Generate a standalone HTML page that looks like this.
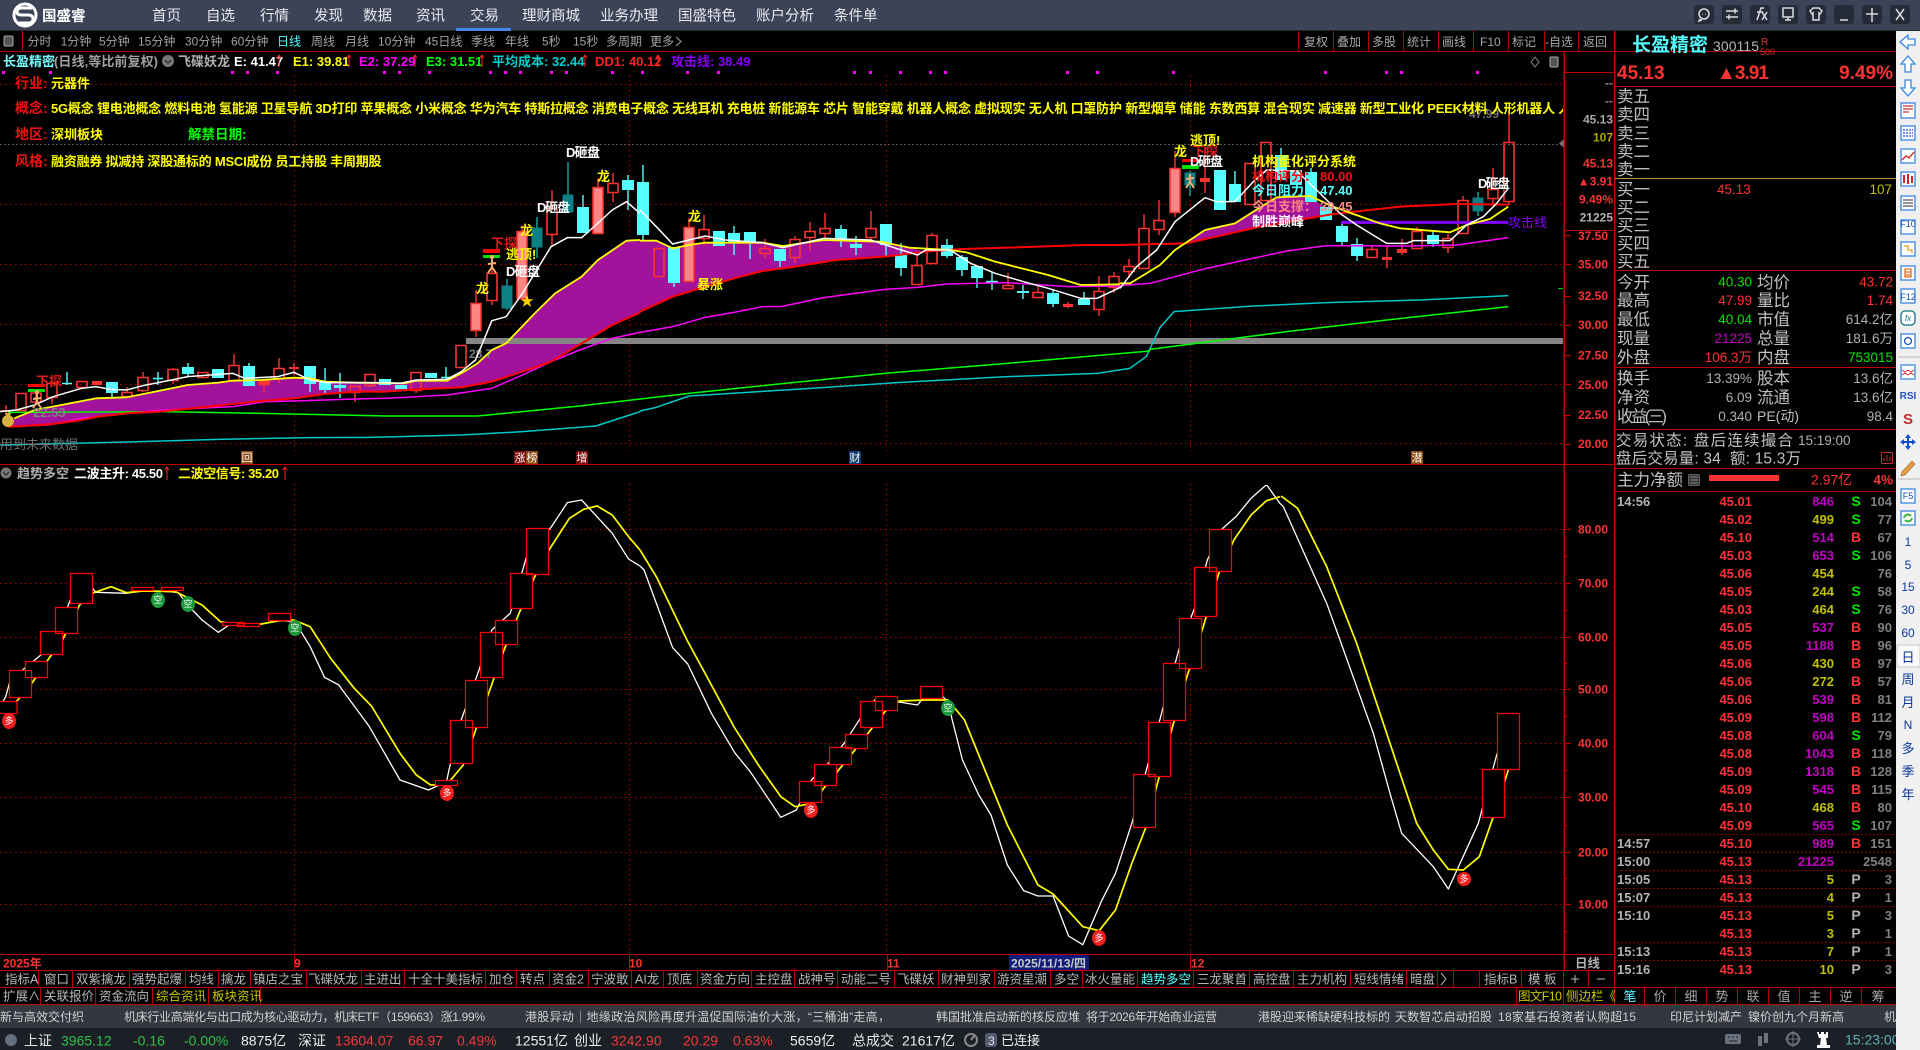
<!DOCTYPE html>
<html lang="zh"><head><meta charset="utf-8"><title>国盛睿</title>
<style>
html,body{margin:0;padding:0;background:#000;overflow:hidden;width:1920px;height:1050px}
svg{position:absolute;left:0;top:0;display:block}
text{font-family:"Liberation Sans","Noto Sans CJK SC",sans-serif;white-space:pre}
.ln{fill:none;vector-effect:non-scaling-stroke;stroke-linejoin:round}
.nav{font-size:14.5px;fill:#e8eaf0}
.tb{font-size:12px;fill:#a4a4a4}
.bt{font-size:12px;fill:#a8a8a8}
.b13{font-size:13px;font-weight:bold}
.ax{font-size:12px;font-weight:bold;fill:#ff3232}
.lb{font-size:16.5px;fill:#c0c0c0}
.v{font-size:13.5px}
.tab{font-size:12.5px;fill:#b8b8b8}
.nw{font-size:12px;fill:#d0d0d0}
.st{font-size:14px}
.p{font-size:13px;font-weight:bold;fill:#ff3232}
.tm{font-size:13px;font-weight:bold;fill:#b4b4b4}
.m{fill:#c000c0}.o{fill:#c0c000}
.gc{font-size:13px;font-weight:bold;fill:#808080}
.bs{font-size:14px;font-weight:bold}
.rt{font-size:12px;fill:#0b3a9a}
</style></head><body>
<svg width="1920" height="1050" viewBox="0 0 1920 1050" xmlns="http://www.w3.org/2000/svg">
<defs><clipPath id="cc"><rect x="0" y="52" width="1563" height="412"/></clipPath>
<clipPath id="cb"><rect x="0" y="485" width="1563" height="468"/></clipPath></defs>
<rect width="1920" height="1050" fill="#000"/>

<!-- title bar -->
<rect width="1920" height="30" fill="#3c4356"/>
<rect y="30" width="1920" height="1" fill="#23262f"/>
<rect x="456" y="28" width="55" height="3" fill="#4a86f0"/>
<circle cx="25" cy="15" r="11" fill="none" stroke="#fff" stroke-width="3"/>
<path d="M32 8 H22 Q17 8 17 12 Q17 15 22 15 H28 Q33 15 33 19 Q33 23 28 23 H17" fill="none" stroke="#fff" stroke-width="3"/>
<text x="42" y="21" font-size="14.5" font-weight="bold" fill="#fff">国盛睿</text>
<g class="nav">
<text class="nav" x="152" y="20.5">首页</text><text class="nav" x="206" y="20.5">自选</text><text class="nav" x="260" y="20.5">行情</text><text class="nav" x="314" y="20.5">发现</text><text class="nav" x="363" y="20.5">数据</text><text class="nav" x="416" y="20.5">资讯</text><text class="nav" x="470" y="20.5">交易</text><text class="nav" x="522" y="20.5">理财商城</text><text class="nav" x="600" y="20.5">业务办理</text><text class="nav" x="678" y="20.5">国盛特色</text><text class="nav" x="756" y="20.5">账户分析</text><text class="nav" x="834" y="20.5">条件单</text>
</g>
<g fill="#262b38"><rect x="1694" y="5" width="20" height="19" rx="3"/><rect x="1722" y="5" width="20" height="19" rx="3"/><rect x="1750" y="5" width="20" height="19" rx="3"/><rect x="1778" y="5" width="20" height="19" rx="3"/><rect x="1806" y="5" width="20" height="19" rx="3"/><rect x="1834" y="5" width="20" height="19" rx="3"/><rect x="1862" y="5" width="20" height="19" rx="3"/><rect x="1890" y="5" width="20" height="19" rx="3"/></g>
<g fill="none" stroke="#d8dce4" stroke-width="1.5">
<circle cx="1704" cy="14" r="5"/><path d="M1702 14h.5M1705 14h.5M1700 19l-1 2 3-1"/>
<path d="M1726 11h12M1726 17h12M1735 8.500v5M1729 14.500v5"/>
<path d="M1757 20l4-12h3M1757 12h6M1762 12l5 8M1767 12l-5 8"/>
<rect x="1783" y="8" width="10" height="9"/><path d="M1785 20h6M1788 17v3"/>
<path d="M1813 8l-3 3 2 3 1-1v7h6v-7l1 1 2-3-3-3h-6z"/>
<path d="M1840 20h8"/>
<path d="M1872 8v14M1866 14h12"/>
<path d="M1896 9l8 11M1904 9l-8 11"/>
</g>

<!-- toolbar row -->
<rect x="4" y="36" width="9" height="10" rx="1.500" fill="#555" stroke="#aaa"/>
<rect x="22" y="31" width="1" height="20" fill="#b00000"/>
<rect y="51" width="1896" height="1" fill="#b80000"/>
<text class="tb" x="27.500" y="45.500">分时</text><text class="tb" x="60.600" y="45.500">1分钟</text><text class="tb" x="99" y="45.500">5分钟</text><text class="tb" x="138" y="45.500">15分钟</text><text class="tb" x="185" y="45.500">30分钟</text><text class="tb" x="231" y="45.500">60分钟</text><text class="tb" x="277" y="45.500" style="fill:#55ffff">日线</text><text class="tb" x="311" y="45.500">周线</text><text class="tb" x="345" y="45.500">月线</text><text class="tb" x="378" y="45.500">10分钟</text><text class="tb" x="425" y="45.500">45日线</text><text class="tb" x="471" y="45.500">季线</text><text class="tb" x="505" y="45.500">年线</text><text class="tb" x="542" y="45.500">5秒</text><text class="tb" x="573" y="45.500">15秒</text><text class="tb" x="606" y="45.500">多周期</text><text class="tb" x="650" y="45.500">更多</text><path d="M676 37l5 4.500-5 4.500" fill="none" stroke="#a4a4a4"/>
<g fill="#b00000"><rect x="1298" y="31" width="1" height="20"/><rect x="1333" y="31" width="1" height="20"/><rect x="1368" y="31" width="1" height="20"/><rect x="1403" y="31" width="1" height="20"/><rect x="1438" y="31" width="1" height="20"/><rect x="1473" y="31" width="1" height="20"/><rect x="1508" y="31" width="1" height="20"/><rect x="1544" y="31" width="1" height="20"/><rect x="1578" y="31" width="1" height="20"/></g>
<text class="bt" x="1304" y="46">复权</text><text class="bt" x="1337" y="46">叠加</text><text class="bt" x="1372" y="46">多股</text><text class="bt" x="1407" y="46">统计</text><text class="bt" x="1442" y="46">画线</text><text class="bt" x="1480" y="46">F10</text><text class="bt" x="1512" y="46">标记</text><text class="bt" x="1545" y="46">-自选</text><text class="bt" x="1583" y="46">返回</text>

<!-- info line -->
<text class="b13" x="3" y="66" fill="#7ff">长盈精密</text><text class="b13" x="54" y="66" fill="#a0a0a0" textLength="104">(日线,等比前复权)</text>
<circle cx="168" cy="61" r="6" fill="#777"/><path d="M165 60l3 3 3-3" stroke="#222" fill="none"/>
<text class="b13" x="178" y="66" fill="#b0b0b0">飞碟妖龙</text>
<text class="b13" x="234" y="66" fill="#fff">E: 41.47</text><text class="b13" x="293" y="66" fill="#ff0">E1: 39.81</text><text class="b13" x="359" y="66" fill="#f0f">E2: 37.29</text><text class="b13" x="426" y="66" fill="#0f0">E3: 31.51</text><text class="b13" x="492" y="66" fill="#0cc">平均成本: 32.44</text><text class="b13" x="595" y="66" fill="#f22">DD1: 40.12</text><text class="b13" x="671" y="66" fill="#80f">攻击线: 38.49</text>
<path d="M279 67V55M277 58l2-3 2 3M349 67V55M347 58l2-3 2 3M415 67V55M413 58l2-3 2 3M482 67V55M480 58l2-3 2 3M585 67V55M583 58l2-3 2 3M658 67V55M656 58l2-3 2 3" fill="none" stroke="#f22"/>
<g fill="#f0f"><rect x="2" y="71" width="3" height="3"/><rect x="49" y="71" width="3" height="3"/><rect x="231" y="71" width="3" height="3"/><rect x="246" y="71" width="3" height="3"/><rect x="276" y="71" width="3" height="3"/><rect x="383" y="71" width="3" height="3"/><rect x="398" y="71" width="3" height="3"/><rect x="428" y="71" width="3" height="3"/><rect x="489" y="71" width="3" height="3"/><rect x="504" y="71" width="3" height="3"/><rect x="519" y="71" width="3" height="3"/><rect x="550" y="71" width="3" height="3"/><rect x="565" y="71" width="3" height="3"/><rect x="611" y="71" width="3" height="3"/><rect x="641" y="71" width="3" height="3"/><rect x="686" y="71" width="3" height="3"/><rect x="717" y="71" width="3" height="3"/><rect x="853" y="71" width="3" height="3"/><rect x="869" y="71" width="3" height="3"/><rect x="899" y="71" width="3" height="3"/><rect x="929" y="71" width="3" height="3"/><rect x="944" y="71" width="3" height="3"/><rect x="1066" y="71" width="3" height="3"/><rect x="1096" y="71" width="3" height="3"/><rect x="1172" y="71" width="3" height="3"/><rect x="1324" y="71" width="3" height="3"/><rect x="1385" y="71" width="3" height="3"/><rect x="1400" y="71" width="3" height="3"/><rect x="1476" y="71" width="3" height="3"/></g>

<!-- grid -->
<g stroke="#b00000" stroke-width="1" stroke-dasharray="1.500 3.500" fill="none">
<path d="M0 84.500H1564M0 204.500H1564M0 264.500H1564M0 324.500H1564M0 384.500H1564M0 443.500H1564"/>
<path d="M0 529.500H1564M0 583.500H1564M0 637.500H1564M0 689.500H1564M0 743.500H1564M0 797.500H1564M0 852.500H1564M0 904.500H1564"/>
<path d="M294.500 75V451M629.500 75V451M886.500 75V451M1190.500 75V451M294.500 484V953M629.500 484V953M886.500 484V953M1190.500 484V953"/>
</g>
<path d="M0 144.500H1564" stroke="#5a5a5a" stroke-dasharray="2 2"/>

<g clip-path="url(#cc)">
<!-- purple -->
<path transform="translate(0,200) scale(.40816,.33333)" fill="#a3129b" d="M35 655L85 630 150 615 235 595 310 592 400 570 460 555 535 548 570 542 640 540 720 533 760 535 795 545 870 548 990 550 1020 542 1095 542 1130 520 1170 490 1205 450 1240 430 1310 340 1360 280 1425 230 1465 180 1535 122 1570 120 1570 338 1500 375 1425 430 1350 485 1280 515 1205 545 1130 562 1020 568 945 575 870 575 795 582 720 595 640 603 570 612 470 625 390 635 310 640 240 650 200 660 130 672 60 678 20 680Z"/>
<path transform="translate(640,200) scale(.40816,.33333)" fill="#a3129b" d="M0 122L40 122 80 145 120 135 160 128 300 128 350 138 450 120 590 125 660 143 700 155 600 170 480 180 380 200 300 213 240 232 160 260 80 290 0 335Z"/>
<path transform="translate(1120,110) scale(.33333)" fill="#a3129b" d="M200 400L255 360 345 340 400 305 470 262 570 258 640 312 420 350Z"/>

<!-- gray band -->
<rect x="466" y="338" width="1098" height="6" fill="#858585"/>
<text x="469" y="358" font-size="12" font-weight="bold" fill="#808080">28.7</text>

<!-- wicks red -->
<path fill="none" stroke="#ff3232" stroke-width="1.400" d="M6 405V415M1 411H11M36 392V403M52 397V404M143 372V377M143 390V392M127 387V392M173 368V369M173 380V384M234 354V365M234 380V382M264 384V393M279 358V368M279 378V383M294 363V375M289 368H299M355 392V402M370 385V387M416 390V393M476 290V303M476 330V337M492 260V273M492 300V305M522 225V231M522 298V300M552 190V208M552 234V246M598 178V187M613 173V183M613 192V202M689 218V227M704 215V229M704 238V245M765 239V248M765 253V258M795 236V239M795 257V263M810 222V231M810 237V251M825 213V228M825 233V239M871 211V228M871 237V240M917 255V265M932 233V235M1008 273V285M1038 286V292M1068 302V308M1099 276V291M1099 309V316M1114 272V276M1114 287V293M1129 259V266M1129 271V278M1144 214V228M1159 200V220M1159 229V235M1175 151V168M1175 212V217M1205 147V193M1372 245V249M1387 246V268M1402 239V255M1417 227V231M1448 234V238M1448 247V253M1463 196V200M1493 168V189M1493 198V205M1509 110V142M1509 201V205"/>
<!-- wicks cyan -->
<path fill="none" stroke="#55ffff" stroke-width="1.400" d="M67 372V385M62 383.500H72M112 393V397M158 372V385M153 378.500H163M188 363V377M249 363V366M310 384V392M325 368V393M340 373V398M446 367V380M441 377.500H451M583 195V207M628 175V210M643 165V240M674 283V287M734 226V255M750 232V259M780 261V267M841 225V247M856 236V255M886 224V256M901 243V276M947 239V258M962 255V276M977 278V288M992 272V290M987 281.500H997M1023 285V299M1018 292H1028M1053 289V307M1084 292V299M1235 171V184M1281 148V155M1311 168V172M1342 223V245M1357 238V261M1433 232V247"/>
<path fill="none" stroke="#1aa" stroke-width="1.400" d="M507 279V310M537 217V258M568 162V195M1190 171V196M1478 192V216"/>
<!-- hollow red -->
<path fill="none" stroke="#ff3232" stroke-width="1.600" d="M16 393.500h10v17h-10zM31 393h10v9h-10zM47 383.500h10v14h-10zM77 381.500h10v6h-10zM122 392.500h10v4h-10zM138 377.500h10v13h-10zM168 369.500h10v11h-10zM198 372.500h10v5h-10zM229 365.500h10v15h-10zM259 380.500h10v4h-10zM274 368.500h10v10h-10zM350 386.500h10v6h-10zM365 374.500h10v11h-10zM411 372.500h10v18h-10zM456 345.500h10v22h-10zM487 273.500h10v27h-10zM547 208.500h10v26h-10zM608 183.500h10v9h-10zM654 248.500h10v28h-10zM699 229.500h10v9h-10zM760 248.500h10v5h-10zM790 239.500h10v18h-10zM805 231.500h10v6h-10zM820 228.500h10v5h-10zM866 228.500h10v9h-10zM912 265.500h10v19h-10zM927 235.500h10v28h-10zM1003 285.500h10v3h-10zM1033 292.500h10v5h-10zM1094 291.500h10v18h-10zM1109 276.500h10v11h-10zM1124 266.500h10v5h-10zM1139 228.500h10v40h-10zM1154 220.500h10v9h-10zM1245 163.500h10v41h-10zM1261 142.500h10v58h-10zM1367 249.500h10v8h-10zM1412 231.500h10v17h-10zM1443 238.500h10v9h-10zM1458 200.500h10v33h-10zM1488 189.500h10v9h-10zM1504 142.500h10v59h-10z"/>
<!-- filled red -->
<path fill="#ff3232" d="M92 381h10v4h-10zM1 410h10v2h-10zM259 380h10v4h-10zM1063 304h10v3h-10zM1382 257h10v3h-10zM1397 249h10v4h-10zM1200 178h10v4h-10zM289 367h10v2h-10z"/>
<!-- pink -->
<path fill="#ff8484" stroke="#ff3232" stroke-width="1.500" d="M471 303.500h10v27h-10zM517 231.500h10v67h-10zM593 187.500h10v46h-10zM684 227.500h10v54h-10zM1170 168.500h10v44h-10z"/>
<!-- teal -->
<path fill="#0c8083" stroke="#0c8083" d="M502 286h10v22h-10zM532 228h10v19h-10zM563 195h10v17h-10zM1185 173h10v12h-10zM1473 198h10v13h-10z"/>
<!-- cyan -->
<path fill="#55ffff" d="M106 382h12v11h-12zM182 367h12v7h-12zM212 369h12v9h-12zM243 366h12v20h-12zM304 366h12v18h-12zM319 382h12v8h-12zM334 385h12v3h-12zM379 379h12v6h-12zM395 385h12v4h-12zM425 373h12v5h-12zM577 207h12v26h-12zM622 180h12v10h-12zM637 182h12v53h-12zM668 247h12v36h-12zM713 231h12v15h-12zM728 233h12v9h-12zM744 232h12v11h-12zM774 249h12v12h-12zM835 229h12v12h-12zM850 244h12v4h-12zM880 224h12v21h-12zM895 255h12v13h-12zM941 245h12v11h-12zM956 257h12v13h-12zM971 266h12v12h-12zM986 281h12v2h-12zM1017 291h12v2h-12zM1047 293h12v11h-12zM1078 299h12v6h-12zM1214 170h12v40h-12zM1229 184h12v18h-12zM1275 155h12v25h-12zM1290 170h12v15h-12zM1305 172h12v30h-12zM1320 207h12v13h-12zM1336 226h12v16h-12zM1351 244h12v12h-12zM1427 235h12v9h-12z"/>

<!-- lines -->
<g stroke-width="1.500">
<g transform="translate(0,200) scale(.40816,.33333)">
<polyline class="ln" stroke="#00c8c8" points="0,735 345,725 535,718 760,713 910,712 1130,705 1280,695 1460,678 1568,635"/>
<polyline class="ln" stroke="#00ff00" points="20,637 400,635 640,640 832,645 945,648 1170,648 1280,635 1420,618 1568,597"/>
<polyline class="ln" stroke="#ff00ff" points="30,680 120,675 200,655 270,645 400,630 570,620 650,605 720,603 870,597 945,595 1095,585 1205,565 1280,525 1350,485 1420,450 1500,415 1568,397"/>
<polyline class="ln" stroke="#ff0000" stroke-width="2" points="20,680 60,678 130,672 200,660 240,650 310,640 390,635 470,625 570,612 640,603 720,595 795,582 870,575 945,575 1020,568 1130,562 1205,545 1280,515 1350,485 1425,430 1500,375 1568,338"/>
<polyline class="ln" stroke="#ffff00" stroke-width="1.800" points="35,655 85,630 150,615 235,595 310,592 400,570 460,555 535,548 570,542 640,540 720,533 760,535 795,545 870,548 990,550 1020,542 1095,542 1130,520 1170,490 1205,450 1240,430 1310,340 1360,280 1425,230 1465,180 1535,122 1568,120"/>
<polyline class="ln" stroke="#ffffff" points="0,635 40,630 85,615 130,590 200,565 235,560 270,568 310,570 350,557 400,545 460,530 570,520 600,535 680,530 720,517 760,540 800,548 870,548 945,548 980,550 1020,540 1095,538 1130,515 1165,480 1205,362 1240,350 1280,280 1350,140 1390,113 1425,113 1460,75 1500,30 1535,5 1568,40"/>
</g>
<g transform="translate(640,200) scale(.40816,.33333)">
<polyline class="ln" stroke="#00c8c8" points="0,633 40,622 120,588 380,568 640,547 900,530 1120,520 1200,505 1240,470 1275,380"/>
<polyline class="ln" stroke="#00ff00" points="0,597 120,580 340,552 600,520 900,490 1250,453"/>
<polyline class="ln" stroke="#ff00ff" points="0,397 80,380 160,352 230,337 300,320 345,320 450,293 600,268 680,262 750,252 900,248 1050,260 1176,258"/>
<polyline class="ln" stroke="#ff0000" stroke-width="2" points="0,335 80,290 160,260 240,232 300,213 380,200 480,180 600,170 700,155 790,147 900,143 1090,135 1176,135"/>
<polyline class="ln" stroke="#ffff00" stroke-width="1.800" points="0,122 40,122 80,145 120,135 160,128 300,128 350,138 450,120 590,125 660,143 760,150 800,157 870,185 1000,225 1080,255 1176,253"/>
<polyline class="ln" stroke="#ffffff" points="0,30 40,80 80,132 160,108 210,120 300,128 350,143 450,115 565,120 640,150 680,165 700,150 760,150 810,190 870,220 940,245 1000,265 1080,295 1120,295 1180,260"/>
</g>
<g transform="translate(1120,110) scale(.33333)">
<polyline class="ln" stroke="#00c8c8" points="118,655 162,605 400,588 620,578 900,570 1165,557"/>
<polyline class="ln" stroke="#00ff00" points="90,718 500,665 800,630 1165,590"/>
<polyline class="ln" stroke="#ff00ff" points="0,527 90,520 260,475 500,423 620,407 860,408 1010,405 1165,383"/>
<polyline class="ln" stroke="#ff0000" stroke-width="2" points="0,405 200,400 420,350 640,312 840,290 1010,282 1165,284"/>
<polyline class="ln" stroke="#8000ff" stroke-width="3" points="663,337 1165,337"/>
<polyline class="ln" stroke="#ffff00" stroke-width="1.800" points="0,520 30,520 120,465 165,420 255,360 345,340 400,305 470,262 570,258 640,290 700,312 780,340 840,355 990,367 1040,345 1110,327 1165,290"/>
<polyline class="ln" stroke="#ffffff" points="0,535 50,470 110,420 165,335 255,263 290,275 345,275 400,215 440,180 530,183 590,240 660,310 710,345 800,400 860,400 880,392 990,392 1040,345 1090,320 1130,280 1165,235"/>
</g>
</g>

<!-- bars/runners -->
<g fill="#ff0000"><rect x="28" y="384" width="17" height="3"/><rect x="483" y="249" width="17" height="4"/><rect x="1182" y="159" width="17" height="3"/></g>
<g fill="#00e000"><rect x="28" y="389" width="17" height="3"/><rect x="483" y="255" width="17" height="3"/><rect x="1182" y="165" width="17" height="4"/></g>
<g fill="none" stroke="#f0b070" stroke-width="2"><path d="M37 394v8l-4 6M37 402l4 6M33 399l8-1"/><path d="M492 259v8l-4 6M492 267l4 6M488 264l8-1"/><path d="M1190 174v8l-4 6M1190 182l4 6M1186 179l8-1"/></g>
<g fill="#f0b070"><circle cx="37" cy="392" r="2"/><circle cx="492" cy="257" r="2"/></g>
<circle cx="8" cy="421" r="6" fill="#d8b040"/><path d="M5 413h6l-1 3h-4z" fill="#d8b040"/>

<!-- chart labels -->
<text x="527" y="306" font-size="14" text-anchor="middle" fill="#ffd000">★</text>
<text class="b13" x="36" y="386" fill="#e01818">下探</text><text class="b13" x="491" y="248" fill="#e01818">下探</text><text class="b13" x="1192" y="156" fill="#e01818">下探</text>
<text class="b13" x="506" y="259" fill="#ff0">逃顶!</text><text class="b13" x="1190" y="145" fill="#ff0">逃顶!</text>
<text class="b13" x="597" y="181" fill="#ff0">龙</text><text class="b13" x="520" y="235" fill="#ff0">龙</text><text class="b13" x="476" y="293" fill="#ff0">龙</text><text class="b13" x="688" y="221" fill="#ff0">龙</text><text class="b13" x="1174" y="156" fill="#ff0">龙</text>
<g fill="#fff"><text class="b13" x="566" y="157" textLength="34">D砸盘</text><text class="b13" x="537" y="212" textLength="33">D砸盘</text><text class="b13" x="506" y="276" textLength="34">D砸盘</text><text class="b13" x="1190" y="166" textLength="33">D砸盘</text><text class="b13" x="1478" y="188" textLength="32">D砸盘</text></g>
<text class="b13" x="697" y="289" fill="#ff0" textLength="26">暴涨</text>
<text x="0" y="449" font-size="13" fill="#707070">用到未来数据</text>
<text x="33" y="417" font-size="13" font-weight="bold" fill="#808080">22.53</text>
<text x="1469" y="118" font-size="12" font-weight="bold" fill="#707070">47.99</text>
<text class="b13" x="1252" y="166" fill="#ff0" textLength="104">机构量化评分系统</text>
<text class="b13" x="1252" y="181" fill="#f01010">机构评分：</text><text class="b13" x="1320" y="181" fill="#f01010">80.00</text>
<text class="b13" x="1252" y="195" fill="#55ffff">今日阻力：</text><text class="b13" x="1320" y="195" fill="#55ffff">47.40</text>
<text class="b13" x="1252" y="211" fill="#ff8484">今日支撑：</text><text class="b13" x="1320" y="211" fill="#ff8484">39.45</text>
<text class="b13" x="1252" y="226" fill="#fff">制胜巅峰</text>
<text x="1508" y="227" font-size="13" fill="#8000ff">攻击线</text>
</g>

<!-- text overlay -->
<text x="15" y="88" font-size="14" font-weight="bold" fill="#f01010">行业:</text><text class="b13" x="51" y="88" fill="#ff0">元器件</text>
<text x="15" y="113" font-size="14" font-weight="bold" fill="#f01010">概念:</text>
<g clip-path="url(#cc)"><text class="b13" x="51" y="113" fill="#ff0" style="letter-spacing:-.2px">5G概念 锂电池概念 燃料电池 氢能源 卫星导航 3D打印 苹果概念 小米概念 华为汽车 特斯拉概念 消费电子概念 无线耳机 充电桩 新能源车 芯片 智能穿戴 机器人概念 虚拟现实 无人机 口罩防护 新型烟草 储能 东数西算 混合现实 减速器 新型工业化 PEEK材料 人形机器人 人</text></g>
<text x="15" y="139" font-size="14" font-weight="bold" fill="#f01010">地区:</text><text class="b13" x="51" y="139" fill="#ff0">深圳板块</text>
<text x="188" y="139" font-size="13.500" font-weight="bold" fill="#0f0">解禁日期:</text>
<text x="15" y="166" font-size="14" font-weight="bold" fill="#f01010">风格:</text><text class="b13" x="51" y="166" fill="#ff0" style="letter-spacing:-.2px">融资融券 拟减持 深股通标的 MSCI成份 员工持股 丰周期股</text>

<!-- top-right corner glyphs -->
<path d="M1535 57l4 5-4 5-4-5z" fill="none" stroke="#888"/><rect x="1550" y="57" width="8" height="10" rx="1" fill="#555" stroke="#aaa"/>
<path d="M1564 139v9l-5-4.500z" fill="#777"/>

<!-- tag icons -->
<g font-size="11" fill="#fff" text-anchor="middle">
<rect x="241" y="451" width="12" height="13" fill="#8a4a10"/><text x="247" y="461.500">回</text>
<rect x="514" y="451" width="12" height="13" fill="#7a0c0c"/><text x="520" y="461.500">涨</text>
<rect x="526" y="451" width="12" height="13" fill="#8a4a10"/><text x="532" y="461.500">榜</text>
<rect x="576" y="451" width="12" height="13" fill="#7a0c0c"/><text x="582" y="461.500">增</text>
<rect x="849" y="451" width="12" height="13" fill="#0a3a70"/><text x="855" y="461.500">财</text>
<rect x="1411" y="451" width="12" height="13" fill="#8a4a10"/><text x="1417" y="461.500">潜</text>
</g>

<!-- pane divider -->
<rect y="464" width="1615" height="1" fill="#c00000"/>
<circle cx="6" cy="473" r="5.500" fill="#777"/><path d="M3 472l3 3 3-3" stroke="#222" fill="none"/>
<text class="b13" x="17" y="478" fill="#b0b0b0">趋势多空</text>
<text class="b13" x="74" y="478" fill="#fff" textLength="89">二波主升: 45.50</text>
<path d="M167 480V467M165 470l2-3 2 3" fill="none" stroke="#f22"/>
<text class="b13" x="178" y="478" fill="#ff0" textLength="101">二波空信号: 35.20</text>
<path d="M285 480V467M283 470l2-3 2 3" fill="none" stroke="#f22"/>

<!-- lower pane -->
<g clip-path="url(#cb)">
<g stroke-width="1.300">
<g transform="translate(0,470) scale(.40816,.33333)">
<polyline class="ln" stroke="#fff" points="0,710 14,680 23,640 60,595 90,565 125,530 160,430 172,390 227,355 235,367 310,370 349,363 400,363 437,368 460,405 495,450 535,487 565,462 640,462 685,450 723,456 760,530 795,622 830,645 905,770 980,930 1050,960 1094,935 1100,900 1130,750 1175,595 1205,480 1250,430 1290,260 1350,172 1390,98 1425,90 1500,190 1540,267 1568,288"/>
<polyline class="ln" stroke="#ff0" stroke-width="1.700" points="40,695 75,645 120,565 155,505 195,405 230,368 272,350 310,368 350,363 430,365 495,405 540,455 590,465 640,462 685,452 720,450 760,470 810,565 868,655 910,708 980,850 1020,915 1055,945 1094,945 1135,885 1200,660 1235,540 1275,420 1310,320 1345,240 1395,145 1430,118 1463,108 1500,135 1540,200 1568,240"/>
</g>
<g transform="translate(640,470) scale(.40816,.33333)">
<polyline class="ln" stroke="#fff" points="0,288 10,300 80,533 117,582 175,730 232,848 270,905 345,1042 383,1020 420,930 465,875 500,820 540,745 575,690 640,697 680,705 690,690 714,650 755,695 765,750 790,870 830,975 860,1035 900,1185 940,1262 975,1278 1012,1278 1050,1398 1085,1424 1130,1295 1165,1210 1205,1060 1245,880 1280,720 1320,540 1360,410 1390,270 1425,178 1460,140 1497,85 1535,44 1568,100"/>
<polyline class="ln" stroke="#ff0" stroke-width="1.700" points="0,240 40,320 115,510 155,600 230,770 290,885 345,980 380,1010 420,1000 450,955 520,850 600,725 635,693 700,690 755,690 795,750 855,930 900,1065 975,1245 1012,1272 1085,1370 1125,1382 1165,1320 1205,1180 1240,1070 1300,790 1340,620 1380,470 1418,310 1455,210 1497,135 1535,92 1568,80"/>
</g>
<g transform="translate(1100,470) scale(.33333)">
<polyline class="ln" stroke="#fff" points="540,100 550,110 680,400 720,510 820,790 870,970 905,1090 1000,1190 1045,1257 1135,1060 1190,855 1215,790"/>
<polyline class="ln" stroke="#ff0" stroke-width="1.700" points="543,78 593,115 680,290 770,520 870,820 950,1060 1000,1140 1045,1198 1090,1200 1138,1160 1180,1040 1225,900"/>
</g>
</g>
<!-- boxes -->
<path fill="#000" stroke="#ff0000" stroke-width="1.200" d="M-5 701.500h22v12h-22zM9.500 670.500h22v27h-22zM25.500 661.500h22v16h-22zM40.500 631.500h22v23h-22zM55.500 607.500h22v26h-22zM70.500 573.500h22v30h-22zM131.500 587.500h22v3h-22zM161.500 587.500h22v3h-22zM222.500 622.500h22v3h-22zM237.500 623.500h22v3h-22zM268.500 613.500h22v7h-22zM435.500 780.500h22v5h-22zM450.500 720.500h22v43h-22zM465.500 680.500h22v47h-22zM480.500 632.500h22v45h-22zM495.500 620.500h22v24h-22zM510.500 573.500h22v35h-22zM526.500 528.500h22v46h-22zM799.500 781.500h22v21h-22zM814.500 764.500h22v21h-22zM829.500 747.500h22v17h-22zM845.500 734.500h22v14h-22zM860.500 701.500h22v26h-22zM875.500 696.500h22v14h-22zM920.500 686.500h22v12h-22zM1133.500 774.500h22v53h-22zM1148.500 722.500h22v54h-22zM1163.500 663.500h22v57h-22zM1179.500 618.500h22v50h-22zM1194.500 567.500h22v49h-22zM1209.500 529.500h22v42h-22zM1482.500 769.500h22v48h-22zM1497.500 713.500h22v56h-22z"/>
<g font-size="9" text-anchor="middle" fill="#fff">
<ellipse cx="9" cy="721" rx="7" ry="8" fill="#f02020"/><text x="9" y="724">多</text>
<ellipse cx="447" cy="793" rx="7" ry="8" fill="#f02020"/><text x="447" y="796">多</text>
<ellipse cx="811" cy="810" rx="7" ry="8" fill="#f02020"/><text x="811" y="813">多</text>
<ellipse cx="1099" cy="938" rx="7" ry="8" fill="#f02020"/><text x="1099" y="941">多</text>
<ellipse cx="1464" cy="879" rx="7" ry="7" fill="#f02020"/><text x="1464" y="882">多</text>
<ellipse cx="158" cy="600" rx="7" ry="8" fill="#1c9a3c"/><text x="158" y="603">空</text>
<ellipse cx="188" cy="604" rx="7" ry="8" fill="#1c9a3c"/><text x="188" y="607">空</text>
<ellipse cx="295" cy="628" rx="7" ry="8" fill="#1c9a3c"/><text x="295" y="631">空</text>
<ellipse cx="948" cy="708" rx="7" ry="8" fill="#1c9a3c"/><text x="948" y="711">空</text>
</g>
</g>

<!-- axis -->
<g fill="#c00000">
<rect x="1563.500" y="52" width="1.500" height="918"/>
<rect x="1614" y="31" width="1.500" height="939"/>
<rect x="1564" y="72" width="50" height="1"/>
<rect x="1564" y="230" width="50" height="1"/>
<rect x="1564" y="264" width="7" height="1"/><rect x="1564" y="235" width="7" height="1"/><rect x="1564" y="296" width="7" height="1"/><rect x="1564" y="325" width="7" height="1"/><rect x="1564" y="355" width="7" height="1"/><rect x="1564" y="384" width="7" height="1"/><rect x="1564" y="415" width="7" height="1"/><rect x="1564" y="444" width="7" height="1"/>
<rect x="1564" y="529" width="7" height="1"/><rect x="1564" y="583" width="7" height="1"/><rect x="1564" y="637" width="7" height="1"/><rect x="1564" y="689" width="7" height="1"/><rect x="1564" y="743" width="7" height="1"/><rect x="1564" y="797" width="7" height="1"/><rect x="1564" y="852" width="7" height="1"/><rect x="1564" y="904" width="7" height="1"/>
<rect x="1564" y="556" width="3" height="1"/><rect x="1564" y="610" width="3" height="1"/><rect x="1564" y="663" width="3" height="1"/><rect x="1564" y="716" width="3" height="1"/><rect x="1564" y="770" width="3" height="1"/><rect x="1564" y="825" width="3" height="1"/><rect x="1564" y="878" width="3" height="1"/><rect x="1564" y="931" width="3" height="1"/>
</g>
<rect x="1558" y="288" width="5" height="1" fill="#0c0"/>
<g text-anchor="end">
<text class="ax" x="1613" y="87" style="fill:#888">--</text><text class="ax" x="1613" y="105" style="fill:#888">--</text>
<text class="ax" x="1613" y="123.500" style="fill:#a8a8a8">45.13</text><text class="ax" x="1613" y="141.500" style="fill:#a8a800">107</text>
<text class="ax" x="1613" y="167.500">45.13</text><text class="ax" x="1613" y="185.500">▲3.91</text><text class="ax" x="1613" y="203.500">9.49%</text><text class="ax" x="1613" y="221.500" style="fill:#b0b0b0">21225</text>
<text class="ax" x="1608" y="240">37.50</text><text class="ax" x="1608" y="268.500">35.00</text><text class="ax" x="1608" y="300">32.50</text><text class="ax" x="1608" y="329">30.00</text><text class="ax" x="1608" y="359.500">27.50</text><text class="ax" x="1608" y="389">25.00</text><text class="ax" x="1608" y="419">22.50</text><text class="ax" x="1608" y="448">20.00</text>
<text class="ax" x="1608" y="533.500">80.00</text><text class="ax" x="1608" y="587.500">70.00</text><text class="ax" x="1608" y="641.500">60.00</text><text class="ax" x="1608" y="693.500">50.00</text><text class="ax" x="1608" y="747.500">40.00</text><text class="ax" x="1608" y="801.500">30.00</text><text class="ax" x="1608" y="856.500">20.00</text><text class="ax" x="1608" y="908.500">10.00</text>
</g>

<!-- time axis -->
<rect y="954" width="1615" height="1" fill="#c00000"/>
<rect y="970" width="1615" height="1" fill="#c00000"/>
<rect y="987" width="1896" height="1" fill="#c00000"/>
<rect y="1004" width="1896" height="1" fill="#c00000"/>
<g font-size="12" font-weight="bold" fill="#ff3232"><text x="3" y="967.500">2025年</text><text x="294" y="967.500">9</text><text x="629" y="967.500">10</text><text x="887" y="967.500">11</text><text x="1191" y="967.500">12</text></g>
<g fill="#c00000"><rect x="294" y="955" width="1" height="15"/><rect x="629" y="955" width="1" height="15"/><rect x="887" y="955" width="1" height="15"/><rect x="1190" y="955" width="1" height="15"/></g>
<rect x="1009" y="955" width="80" height="15" fill="#101c78"/>
<text x="1011" y="967.500" font-size="12" font-weight="bold" fill="#c8c8c8" textLength="75">2025/11/13/四</text>
<text x="1575" y="967.500" font-size="12.500" font-weight="bold" fill="#b0b0b0">日线</text>

<!-- tabs row -->
<path fill="none" stroke="#b80000" d="M38.500 971V987M72.500 971V987M129.500 971V987M185.500 971V987M218.500 971V987M250.500 971V987M306.500 971V987M361.500 971V987M404.500 971V987M485.500 971V987M516.500 971V987M549.500 971V987M588.500 971V987M631.500 971V987M663.500 971V987M697.500 971V987M751.500 971V987M794.500 971V987M837.500 971V987M894.500 971V987M938.500 971V987M994.500 971V987M1050.500 971V987M1082.500 971V987M1137.500 971V987M1193.500 971V987M1249.500 971V987M1293.500 971V987M1350.500 971V987M1406.500 971V987M1437.500 971V987M1453.500 971V987M1479.500 971V987M1521.500 971V987M1563.500 971V1005M1588.500 971V987M40.500 988V1004M95.500 988V1004M152.500 988V1004M208.500 988V1004M260.500 988V1004M1516.500 988V1004M1614.500 971V1004"/>
<g class="tab">
<text class="tab" x="5" y="983.500">指标A</text><text class="tab" x="44" y="983.500">窗口</text><text class="tab" x="76" y="983.500">双紫擒龙</text><text class="tab" x="132" y="983.500">强势起爆</text><text class="tab" x="189" y="983.500">均线</text><text class="tab" x="221" y="983.500">擒龙</text><text class="tab" x="253" y="983.500">镇店之宝</text><text class="tab" x="308" y="983.500">飞碟妖龙</text><text class="tab" x="364" y="983.500">主进出</text><text class="tab" x="408" y="983.500">十全十美指标</text><text class="tab" x="489" y="983.500">加仓</text><text class="tab" x="520" y="983.500">转点</text><text class="tab" x="552" y="983.500">资金2</text><text class="tab" x="591" y="983.500">宁波敢</text><text class="tab" x="635" y="983.500">AI龙</text><text class="tab" x="667" y="983.500">顶底</text><text class="tab" x="700" y="983.500">资金方向</text><text class="tab" x="755" y="983.500">主控盘</text><text class="tab" x="798" y="983.500">战神号</text><text class="tab" x="841" y="983.500">动能二号</text><text class="tab" x="897" y="983.500">飞碟妖</text><text class="tab" x="941" y="983.500">财神到家</text><text class="tab" x="997" y="983.500">游资星潮</text><text class="tab" x="1054" y="983.500">多空</text><text class="tab" x="1085" y="983.500">冰火量能</text><text class="tab" x="1141" y="983.500" style="fill:#55ffff">趋势多空</text><text class="tab" x="1197" y="983.500">三龙聚首</text><text class="tab" x="1253" y="983.500">高控盘</text><text class="tab" x="1297" y="983.500">主力机构</text><text class="tab" x="1354" y="983.500">短线情绪</text><text class="tab" x="1410" y="983.500">暗盘</text><text class="tab" x="1484" y="983.500">指标B</text><text class="tab" x="1528" y="983.500">模 板</text>
</g>
<path d="M1441 973l5 6-5 6" fill="none" stroke="#aaa"/>
<path d="M1571 979h8M1575 975v8M1597 979h8" stroke="#bbb" fill="none"/>
<text class="tab" x="3" y="1000.500">扩展∧</text><text class="tab" x="44" y="1000.500">关联报价</text><text class="tab" x="99" y="1000.500">资金流向</text><text class="tab" x="156" y="1000.500" style="fill:#c8c800">综合资讯</text><text class="tab" x="212" y="1000.500" style="fill:#c8c800">板块资讯</text>
<text class="tab" x="1518" y="1000.500" style="fill:#c8c800" textLength="44">图文F10</text><text class="tab" x="1566" y="1000.500" style="fill:#c8c800">侧边栏《</text>

<!-- news -->
<rect y="1005" width="1896" height="23" fill="#34373f"/>
<text class="nw" x="0" y="1021">新与高效交付织</text>
<text class="nw" x="124" y="1021" textLength="361">机床行业高端化与出口成为核心驱动力，机床ETF（159663）涨1.99%</text>
<text class="nw" x="525" y="1021" textLength="365">港股异动｜地缘政治风险再度升温促国际油价大涨，“三桶油”走高，</text>
<text class="nw" x="936" y="1021" textLength="144">韩国批准启动新的核反应堆</text>
<text class="nw" x="1086" y="1021" textLength="131">将于2026年开始商业运营</text>
<text class="nw" x="1258" y="1021" textLength="132">港股迎来稀缺硬科技标的</text>
<text class="nw" x="1395" y="1021" textLength="97">天数智芯启动招股</text>
<text class="nw" x="1498" y="1021" textLength="138">18家基石投资者认购超15</text>
<text class="nw" x="1670" y="1021">印尼计划减产</text>
<text class="nw" x="1748" y="1021">镍价创九个月新高</text>
<text class="nw" x="1884" y="1021">机</text>

<!-- status bar -->
<rect y="1028" width="1896" height="22" fill="#1c2026"/>
<circle cx="11" cy="1040" r="6" fill="#66707c"/>
<g class="st">
<text class="st" x="24" y="1045.500" fill="#e8e8e8">上证</text><text class="st" x="61" y="1045.500" fill="#2fc24a">3965.12</text><text class="st" x="133" y="1045.500" fill="#2fc24a">-0.16</text><text class="st" x="184" y="1045.500" fill="#2fc24a">-0.00%</text><text class="st" x="241" y="1045.500" fill="#eee">8875亿</text>
<text class="st" x="298" y="1045.500" fill="#e8e8e8">深证</text><text class="st" x="335" y="1045.500" fill="#f03a3a">13604.07</text><text class="st" x="408" y="1045.500" fill="#f03a3a">66.97</text><text class="st" x="457" y="1045.500" fill="#f03a3a">0.49%</text><text class="st" x="515" y="1045.500" fill="#eee">12551亿</text>
<text class="st" x="574" y="1045.500" fill="#e8e8e8">创业</text><text class="st" x="611" y="1045.500" fill="#f03a3a">3242.90</text><text class="st" x="683" y="1045.500" fill="#f03a3a">20.29</text><text class="st" x="733" y="1045.500" fill="#f03a3a">0.63%</text><text class="st" x="790" y="1045.500" fill="#eee">5659亿</text>
<text class="st" x="852" y="1045.500" fill="#e8e8e8">总成交</text><text class="st" x="902" y="1045.500" fill="#eee">21617亿</text>
<text class="st" x="1001" y="1045" fill="#eee" style="font-size:13px">已连接</text>
</g>
<circle cx="971" cy="1040" r="6" fill="none" stroke="#8a8a8a" stroke-width="2"/>
<path d="M971 1040l3-4" stroke="#8a8a8a" stroke-width="2"/>
<rect x="985" y="1033" width="12" height="14" rx="3" fill="#555c6c"/><text x="988" y="1045" font-size="12" fill="#dde">3</text>
<rect x="1725" y="1034" width="16" height="10" rx="2" fill="#6a7280"/>
<path d="M1728 1037h2M1732 1037h2M1736 1037h2M1729 1041h8" stroke="#1c2026"/>
<path d="M1758 1036h4v10h-4zM1764 1033h4v10h-4z" fill="#6a7280"/>
<circle cx="1793" cy="1039" r="6" fill="none" stroke="#6a7280" stroke-width="2"/><path d="M1793 1031v16M1785 1039h16" stroke="#6a7280"/>
<path d="M1817 1032h2v2h2v-2h3v2h2v-2h2v6h-2l1 7h3v3h-13v-3h3l1-7h-2z" fill="#fff" stroke="none"/>
<text x="1845" y="1044.500" font-size="14" fill="#5fb0b8">15:23:00</text>

<!-- right panel -->
<text x="1632" y="51" font-size="19" font-weight="bold" fill="#55ffff">长盈精密</text>
<text x="1713" y="51" font-size="14" fill="#b8b8b8" textLength="46">300115</text>
<text x="1761" y="45" font-size="10" fill="#e03030">R</text><text x="1760" y="55" font-size="9" fill="#e03030">500</text>
<rect x="1615" y="86" width="281" height="1" fill="#c00000"/>
<text x="1617" y="79" font-size="19" font-weight="bold" fill="#ff3232">45.13</text>
<text x="1717" y="79" font-size="19" font-weight="bold" fill="#ff3232" textLength="52">▲3.91</text>
<text x="1893" y="79" font-size="19" font-weight="bold" fill="#ff3232" text-anchor="end">9.49%</text>
<g class="lb">
<text class="lb" x="1617" y="102">卖五</text><text class="lb" x="1617" y="120">卖四</text><text class="lb" x="1617" y="139">卖三</text><text class="lb" x="1617" y="157">卖二</text><text class="lb" x="1617" y="175">卖一</text>
<text class="lb" x="1617" y="195">买一</text><text class="lb" x="1617" y="213">买二</text><text class="lb" x="1617" y="231">买三</text><text class="lb" x="1617" y="249">买四</text><text class="lb" x="1617" y="267">买五</text>
</g>
<rect x="1615" y="178" width="281" height="1" fill="#b89428"/>
<text class="v" x="1717" y="194" fill="#ff3232">45.13</text><text class="v" x="1892" y="194" fill="#c0c000" text-anchor="end">107</text>
<rect x="1615" y="270" width="281" height="1" fill="#c00000"/>
<rect x="1615" y="367" width="281" height="1" fill="#c00000"/>
<rect x="1615" y="429" width="281" height="1" fill="#c00000"/>
<rect x="1615" y="468" width="281" height="1" fill="#c00000"/>
<rect x="1615" y="491" width="281" height="1" fill="#c00000"/>
<text class="lb" x="1617" y="288">今开</text><text class="lb" x="1617" y="306">最高</text><text class="lb" x="1617" y="325">最低</text><text class="lb" x="1617" y="344">现量</text><text class="lb" x="1617" y="363">外盘</text><text class="lb" x="1617" y="384">换手</text><text class="lb" x="1617" y="403">净资</text><text class="lb" x="1617" y="422" textLength="50">收益(三)</text>
<text class="lb" x="1757" y="288">均价</text><text class="lb" x="1757" y="306">量比</text><text class="lb" x="1757" y="325">市值</text><text class="lb" x="1757" y="344">总量</text><text class="lb" x="1757" y="363">内盘</text><text class="lb" x="1757" y="384">股本</text><text class="lb" x="1757" y="403">流通</text><text x="1757" y="421" font-size="14" fill="#c0c0c0">PE(动)</text>
<g class="v" text-anchor="end">
<text class="v" x="1752" y="286.500" fill="#00e600">40.30</text><text class="v" x="1752" y="305" fill="#ff3232">47.99</text><text class="v" x="1752" y="324" fill="#00e600">40.04</text><text class="v" x="1752" y="343" fill="#c000c0">21225</text><text class="v" x="1752" y="362" fill="#ff3232">106.3万</text>
<text class="v" x="1893" y="286.500" fill="#ff3232">43.72</text><text class="v" x="1893" y="305" fill="#ff3232">1.74</text><text class="v" x="1893" y="324" fill="#b0b0b0">614.2亿</text><text class="v" x="1893" y="343" fill="#b0b0b0">181.6万</text><text class="v" x="1893" y="362" fill="#00e600">753015</text>
<text class="v" x="1752" y="383" fill="#b0b0b0">13.39%</text><text class="v" x="1752" y="402" fill="#b0b0b0">6.09</text><text class="v" x="1752" y="421" fill="#b0b0b0">0.340</text>
<text class="v" x="1893" y="383" fill="#b0b0b0">13.6亿</text><text class="v" x="1893" y="402" fill="#b0b0b0">13.6亿</text><text class="v" x="1893" y="421" fill="#b0b0b0">98.4</text>
</g>
<text x="1616" y="445.500" font-size="15.500" fill="#c0c0c0" textLength="177">交易状态: 盘后连续撮合</text><text x="1798" y="445" font-size="13.500" fill="#b0b0b0">15:19:00</text>
<text x="1616" y="463.500" font-size="15.500" fill="#c0c0c0" textLength="185">盘后交易量: 34  额: 15.3万</text>
<rect x="1881.500" y="452.500" width="11" height="11" rx="1" fill="none" stroke="#c03030"/><path d="M1884 461v-3M1887 461v-6M1890 461v-4" stroke="#c03030"/>
<text class="lb" x="1617" y="485.500">主力净额</text>
<rect x="1688.500" y="474.500" width="11" height="11" rx="1.500" fill="#333" stroke="#666"/>
<path d="M1690 477h8M1690 480h8M1690 483h8" stroke="#888"/>
<rect x="1709" y="475" width="70" height="6" fill="#ff3232"/>
<text x="1811" y="484.500" font-size="14" fill="#ff3232">2.97亿</text><text x="1893" y="484.500" font-size="13.500" font-weight="bold" fill="#ff3232" text-anchor="end">4%</text>

<!-- tick list -->
<g text-anchor="start">
<text class="tm" x="1617" y="506">14:56</text><text class="tm" x="1617" y="848">14:57</text><text class="tm" x="1617" y="866">15:00</text><text class="tm" x="1617" y="884">15:05</text><text class="tm" x="1617" y="902">15:07</text><text class="tm" x="1617" y="920">15:10</text><text class="tm" x="1617" y="956">15:13</text><text class="tm" x="1617" y="974">15:16</text>
</g>
<path d="M1617 834.500H1895M1617 852.500H1895M1617 870.500H1895M1617 888.500H1895M1617 906.500H1895M1617 942.500H1895M1617 960.500H1895" stroke="#b00000" stroke-dasharray="1.500 2.500"/>
<g text-anchor="end">
<text class="p" x="1752" y="506">45.01</text><text class="p m" x="1834" y="506" style="fill:#c000c0">846</text><text class="gc" x="1892" y="506">104</text>
<text class="p" x="1752" y="524">45.02</text><text class="p" x="1834" y="524" style="fill:#c0c000">499</text><text class="gc" x="1892" y="524">77</text>
<text class="p" x="1752" y="542">45.10</text><text class="p" x="1834" y="542" style="fill:#c000c0">514</text><text class="gc" x="1892" y="542">67</text>
<text class="p" x="1752" y="560">45.03</text><text class="p" x="1834" y="560" style="fill:#c000c0">653</text><text class="gc" x="1892" y="560">106</text>
<text class="p" x="1752" y="578">45.06</text><text class="p" x="1834" y="578" style="fill:#c0c000">454</text><text class="gc" x="1892" y="578">76</text>
<text class="p" x="1752" y="596">45.05</text><text class="p" x="1834" y="596" style="fill:#c0c000">244</text><text class="gc" x="1892" y="596">58</text>
<text class="p" x="1752" y="614">45.03</text><text class="p" x="1834" y="614" style="fill:#c0c000">464</text><text class="gc" x="1892" y="614">76</text>
<text class="p" x="1752" y="632">45.05</text><text class="p" x="1834" y="632" style="fill:#c000c0">537</text><text class="gc" x="1892" y="632">90</text>
<text class="p" x="1752" y="650">45.05</text><text class="p" x="1834" y="650" style="fill:#c000c0">1188</text><text class="gc" x="1892" y="650">96</text>
<text class="p" x="1752" y="668">45.06</text><text class="p" x="1834" y="668" style="fill:#c0c000">430</text><text class="gc" x="1892" y="668">97</text>
<text class="p" x="1752" y="686">45.06</text><text class="p" x="1834" y="686" style="fill:#c0c000">272</text><text class="gc" x="1892" y="686">57</text>
<text class="p" x="1752" y="704">45.06</text><text class="p" x="1834" y="704" style="fill:#c000c0">539</text><text class="gc" x="1892" y="704">81</text>
<text class="p" x="1752" y="722">45.09</text><text class="p" x="1834" y="722" style="fill:#c000c0">598</text><text class="gc" x="1892" y="722">112</text>
<text class="p" x="1752" y="740">45.08</text><text class="p" x="1834" y="740" style="fill:#c000c0">604</text><text class="gc" x="1892" y="740">79</text>
<text class="p" x="1752" y="758">45.08</text><text class="p" x="1834" y="758" style="fill:#c000c0">1043</text><text class="gc" x="1892" y="758">118</text>
<text class="p" x="1752" y="776">45.09</text><text class="p" x="1834" y="776" style="fill:#c000c0">1318</text><text class="gc" x="1892" y="776">128</text>
<text class="p" x="1752" y="794">45.09</text><text class="p" x="1834" y="794" style="fill:#c000c0">545</text><text class="gc" x="1892" y="794">115</text>
<text class="p" x="1752" y="812">45.10</text><text class="p" x="1834" y="812" style="fill:#c0c000">468</text><text class="gc" x="1892" y="812">80</text>
<text class="p" x="1752" y="830">45.09</text><text class="p" x="1834" y="830" style="fill:#c000c0">565</text><text class="gc" x="1892" y="830">107</text>
<text class="p" x="1752" y="848">45.10</text><text class="p" x="1834" y="848" style="fill:#c000c0">989</text><text class="gc" x="1892" y="848">151</text>
<text class="p" x="1752" y="866">45.13</text><text class="p" x="1834" y="866" style="fill:#c000c0">21225</text><text class="gc" x="1892" y="866">2548</text>
<text class="p" x="1752" y="884">45.13</text><text class="p" x="1834" y="884" style="fill:#c0c000">5</text><text class="gc" x="1892" y="884">3</text>
<text class="p" x="1752" y="902">45.13</text><text class="p" x="1834" y="902" style="fill:#c0c000">4</text><text class="gc" x="1892" y="902">1</text>
<text class="p" x="1752" y="920">45.13</text><text class="p" x="1834" y="920" style="fill:#c0c000">5</text><text class="gc" x="1892" y="920">3</text>
<text class="p" x="1752" y="938">45.13</text><text class="p" x="1834" y="938" style="fill:#c0c000">3</text><text class="gc" x="1892" y="938">1</text>
<text class="p" x="1752" y="956">45.13</text><text class="p" x="1834" y="956" style="fill:#c0c000">7</text><text class="gc" x="1892" y="956">1</text>
<text class="p" x="1752" y="974">45.13</text><text class="p" x="1834" y="974" style="fill:#c0c000">10</text><text class="gc" x="1892" y="974">3</text>
</g>
<g text-anchor="middle">
<text class="bs" x="1856" y="506" fill="#00e600">S</text><text class="bs" x="1856" y="524" fill="#00e600">S</text><text class="bs" x="1856" y="542" fill="#ff3232">B</text><text class="bs" x="1856" y="560" fill="#00e600">S</text><text class="bs" x="1856" y="596" fill="#00e600">S</text><text class="bs" x="1856" y="614" fill="#00e600">S</text><text class="bs" x="1856" y="632" fill="#ff3232">B</text><text class="bs" x="1856" y="650" fill="#ff3232">B</text><text class="bs" x="1856" y="668" fill="#ff3232">B</text><text class="bs" x="1856" y="686" fill="#ff3232">B</text><text class="bs" x="1856" y="704" fill="#ff3232">B</text><text class="bs" x="1856" y="722" fill="#ff3232">B</text><text class="bs" x="1856" y="740" fill="#00e600">S</text><text class="bs" x="1856" y="758" fill="#ff3232">B</text><text class="bs" x="1856" y="776" fill="#ff3232">B</text><text class="bs" x="1856" y="794" fill="#ff3232">B</text><text class="bs" x="1856" y="812" fill="#ff3232">B</text><text class="bs" x="1856" y="830" fill="#00e600">S</text><text class="bs" x="1856" y="848" fill="#ff3232">B</text>
<text class="bs" x="1856" y="884" fill="#b0b0b0">P</text><text class="bs" x="1856" y="902" fill="#b0b0b0">P</text><text class="bs" x="1856" y="920" fill="#b0b0b0">P</text><text class="bs" x="1856" y="938" fill="#b0b0b0">P</text><text class="bs" x="1856" y="956" fill="#b0b0b0">P</text><text class="bs" x="1856" y="974" fill="#b0b0b0">P</text>
</g>

<!-- panel tabs -->
<path fill="none" stroke="#b80000" d="M1644.500 988V1004M1675.500 988V1004M1706.500 988V1004M1737.500 988V1004M1768.500 988V1004M1799.500 988V1004M1830.500 988V1004M1861.500 988V1004"/>
<g text-anchor="middle" font-size="13" fill="#a8a8a8">
<text x="1630" y="1001" fill="#55ffff">笔</text><text x="1660" y="1001">价</text><text x="1691" y="1001">细</text><text x="1722" y="1001">势</text><text x="1753" y="1001">联</text><text x="1784" y="1001">值</text><text x="1815" y="1001">主</text><text x="1846" y="1001">逆</text><text x="1878" y="1001">筹</text>
</g>

<!-- right toolbar -->
<rect x="1896" y="31" width="24" height="1019" fill="#f0f0f0"/>
<g fill="none" stroke="#3a86e0" stroke-width="1.300">
<path d="M1900 42l8-7v4h7v6h-7v4z" fill="#fff"/>
<path d="M1908 56l7 8h-4v8h-6v-8h-4z" fill="#fff"/>
<path d="M1905 80h6v8h4l-7 8-7-8h4z" fill="#fff"/>
<rect x="1901" y="103" width="14" height="15" fill="#fff"/><path d="M1903 106h10M1903 109h10M1903 112h6" stroke="#c03030"/>
<rect x="1901" y="126" width="14" height="14" fill="#fff"/><path d="M1903 130h10M1903 133h10M1903 136h10" stroke="#2050c0" stroke-dasharray="2 1"/>
<rect x="1901" y="149" width="14" height="14" fill="#fff"/><path d="M1902 160l4-4 3 2 5-6" stroke="#d02020"/>
<rect x="1901" y="172" width="14" height="14" fill="#fff"/><path d="M1904 175v8M1908 174v10M1912 176v7" stroke="#d02020" stroke-width="2"/>
<rect x="1901" y="196" width="14" height="14" fill="#fff"/><path d="M1903 200h10M1903 203h10M1903 206h10" stroke="#555"/>
<rect x="1901" y="220" width="14" height="14" fill="#fff"/>
<rect x="1901" y="242" width="14" height="14" fill="#fff"/><path d="M1904 246h4v4h4v3" stroke="#e0a020"/>
<rect x="1901" y="266" width="14" height="14" fill="#fff"/><path d="M1905 269h6v8h-6zM1905 272h6M1905 275h6" stroke="#e07020"/>
<rect x="1901" y="289" width="14" height="14" fill="#fff"/>
<rect x="1901" y="311" width="14" height="14" fill="#fff" rx="4" stroke="#107080"/>
<rect x="1901" y="334" width="14" height="14" fill="#fff"/><circle cx="1908" cy="341" r="3.500" stroke="#2050c0"/>
<rect x="1901" y="365" width="14" height="14" fill="#fff"/><path d="M1902 370l3 2 3-2 3 2 3-2M1902 375l3-2 3 2 3-2 3 2" stroke="#d02020" stroke-width=".8"/>
<rect x="1901" y="489" width="14" height="14" fill="#fff"/>
<rect x="1901" y="511" width="14" height="14" fill="#fff"/><path d="M1904 518a4 4 0 0 1 7-2M1912 518a4 4 0 0 1-7 2" stroke="#40b040" stroke-width="2"/>
</g>
<path d="M1898 357h22M1898 479h22" stroke="#b8b8b8"/>
<text x="1908" y="227" font-size="9" text-anchor="middle" fill="#1050b0">F10</text>
<text x="1908" y="300" font-size="9" text-anchor="middle" fill="#1050b0">F12</text>
<text x="1908" y="321" font-size="8" font-style="italic" text-anchor="middle" fill="#107080">fx</text>
<text x="1908" y="499" font-size="9" text-anchor="middle" fill="#1050b0">F5</text>
<text x="1908" y="399" font-size="10" font-weight="bold" text-anchor="middle" fill="#2050c0">RSI</text>
<text x="1908" y="424" font-size="15" font-weight="bold" text-anchor="middle" fill="#c03030">S</text>
<path d="M1908 434l3 4h-2v3h3v-2l4 3-4 3v-2h-3v3h2l-3 4-3-4h2v-3h-3v2l-4-3 4-3v2h3v-3h-2z" fill="#1050d0"/>
<path d="M1902 472l10-11 3 3-10 11-4 1z" fill="#e0a040" stroke="#a06020" stroke-width=".6"/>
<rect x="1897" y="645" width="23" height="22" fill="#fafafa" stroke="#c8c8c8"/>
<g class="rt" text-anchor="middle">
<text class="rt" x="1908" y="546">1</text><text class="rt" x="1908" y="569">5</text><text class="rt" x="1908" y="591">15</text><text class="rt" x="1908" y="614">30</text><text class="rt" x="1908" y="637">60</text>
<text class="rt" x="1908" y="662" style="font-size:13px">日</text><text class="rt" x="1908" y="684" style="font-size:13px">周</text><text class="rt" x="1908" y="707" style="font-size:13px">月</text><text class="rt" x="1908" y="729">N</text><text class="rt" x="1908" y="753" style="font-size:13px">多</text><text class="rt" x="1908" y="776" style="font-size:13px">季</text><text class="rt" x="1908" y="799" style="font-size:13px">年</text>
</g>
</svg>
</body></html>
